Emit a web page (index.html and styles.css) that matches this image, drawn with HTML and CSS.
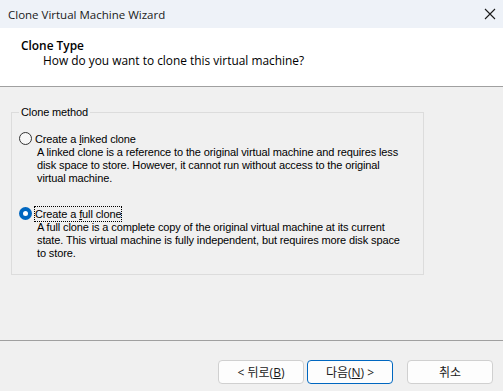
FILE: index.html
```html
<!DOCTYPE html>
<html lang="ko">
<head>
    <meta charset="UTF-8">
    <title>Clone Virtual Machine Wizard</title>
    <link rel="stylesheet" href="styles.css">
</head>
<body>
    <div class="window">
        <div class="titlebar">
            <span class="title">Clone Virtual Machine Wizard</span>
            <svg class="close" width="12" height="12" viewBox="0 0 12 12">
                <path d="M1 1 L11 11 M11 1 L1 11" stroke="#1a1a1a" stroke-width="1.1" fill="none"/>
            </svg>
        </div>

        <div class="header">
            <div class="header-title">Clone Type</div>
            <div class="header-sub">How do you want to clone this virtual machine?</div>
        </div>

        <div class="content">
            <fieldset class="group">
                <legend>Clone method</legend>

                <div class="option">
                    <div class="option-row">
                        <span class="radio"></span>
                        <span class="option-label">Create a <u>l</u>inked clone</span>
                    </div>
                    <p class="option-desc">A linked clone is a reference to the original virtual machine and requires less disk space to store. However, it cannot run without access to the original virtual machine.</p>
                </div>

                <div class="option">
                    <div class="option-row">
                        <span class="radio checked"></span>
                        <span class="option-label focused">Create a <u>f</u>ull clone</span>
                    </div>
                    <p class="option-desc">A full clone is a complete copy of the original virtual machine at its current state. This virtual machine is fully independent, but requires more disk space to store.</p>
                </div>
            </fieldset>
        </div>

        <div class="footer">
            <button class="btn">&lt; 뒤로(<u>B</u>)</button>
            <button class="btn default">다음(<u>N</u>) &gt;</button>
            <button class="btn cancel">취소</button>
        </div>
    </div>
</body>
</html>
```

FILE: styles.css
```css
* {
    margin: 0;
    padding: 0;
    box-sizing: border-box;
}

body {
    font-family: 'Open Sans', 'Noto Sans CJK KR', sans-serif;
    font-size: 11.5px;
    color: #000;
    background: #f0f0f0;
    width: 503px;
    height: 391px;
    overflow: hidden;
}

.window {
    display: flex;
    flex-direction: column;
    height: 100%;
}

/* Title bar */
.titlebar {
    height: 28px;
    background: #eef2f8;
    display: flex;
    align-items: center;
    justify-content: space-between;
    padding: 0 7px 0 8px;
}

.title {
    color: #1a1a1a;
}

/* Header */
.header {
    height: 59px;
    background: #fff;
    border-bottom: 1px solid #a0a0a0;
    padding: 10px 0 0 21px;
    line-height: 15px;
    font-size: 11.9px;
}

.header-title {
    font-weight: 600;
}

.header-sub {
    padding-left: 22px;
}

/* Group box - dialog font */
.content {
    flex: 1;
    padding: 18px 0 0 11px;
    font-family: 'Liberation Sans', Arial, sans-serif;
    font-size: 11px;
    letter-spacing: -0.12px;
    color: #000;
}

.group {
    width: 413px;
    height: 170px;
    border: 1px solid #dcdcdc;
    padding: 7px 16px 0 7px;
}

.group legend {
    padding: 0 2px;
    line-height: 15px;
}

.option {
    margin-bottom: 21px;
}

.option-row {
    display: flex;
    align-items: center;
    height: 15px;
    margin-top: 4px;
}

.radio {
    width: 13px;
    height: 13px;
    border: 1px solid #333;
    border-radius: 50%;
    background: #f7f7f7;
    margin-right: 3px;
    flex-shrink: 0;
}

.radio.checked {
    border: none;
    background: #0067c0;
    position: relative;
}

.radio.checked::after {
    content: '';
    position: absolute;
    top: 4px;
    left: 4px;
    width: 5px;
    height: 5px;
    border-radius: 50%;
    background: #fff;
}

.option-label {
    line-height: 14px;
}

.option-label.focused {
    outline: 1px dotted #000;
}

.option-desc {
    padding-left: 18px;
    line-height: 13px;
}

/* Footer */
.footer {
    height: 51px;
    border-top: 1px solid #a0a0a0;
    display: flex;
    justify-content: flex-end;
    align-items: flex-start;
    padding: 19px 10px 0 0;
}

.btn {
    width: 86px;
    height: 24px;
    font-family: 'Open Sans', 'Noto Sans CJK KR', sans-serif;
    font-size: 12px;
    color: #1a1a1a;
    background: #fdfdfd;
    border: 1px solid #d0d0d0;
    border-radius: 4px;
    margin-left: 3px;
}

.btn.default {
    border: 1px solid #0067c0;
}

.btn.cancel {
    margin-left: 14px;
}
```
